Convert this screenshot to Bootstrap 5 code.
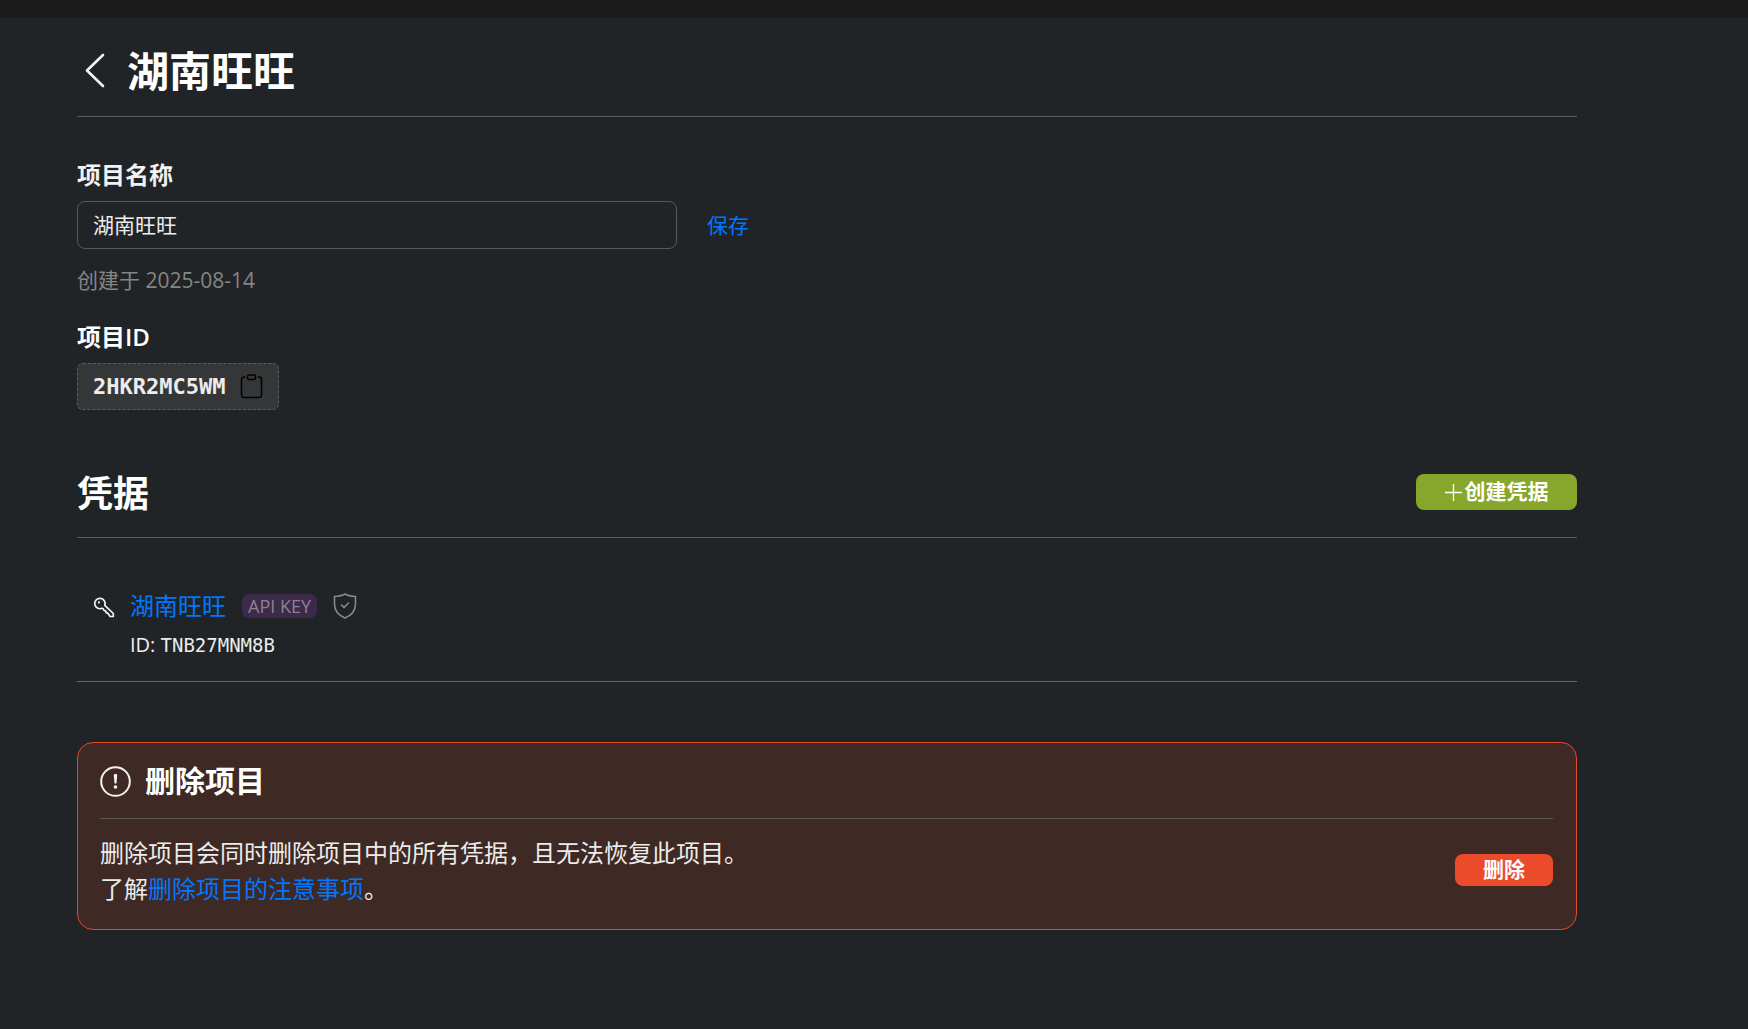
<!DOCTYPE html>
<html lang="zh-CN" data-bs-theme="dark">
<head>
<meta charset="utf-8">
<meta name="viewport" content="width=device-width, initial-scale=1">
<title>湖南旺旺</title>
<link href="https://cdn.jsdelivr.net/npm/bootstrap@5.3.0/dist/css/bootstrap.min.css" rel="stylesheet">
<style>
:root{--page:#202426;--line:#5a5c5d;--fg:#f2f2f2;--link:#0077ff;--muted:#858585}
body{background:var(--page);color:var(--fg);font-family:"Open Sans","Noto Sans CJK SC",sans-serif;font-size:21px;line-height:32px}
a{color:var(--link)}
.topbar{height:18px;background:#1b1b1b}
.page{max-width:1500px;margin-left:77px}
.page-head{padding:27px 0 19px 8px;border-bottom:1px solid var(--line);gap:19px}
.page-head h1{font-size:42px;line-height:52px;font-weight:700}
.back{color:var(--fg);width:23px}
.field-title{font-size:24px;line-height:32px;font-weight:600}
.name-block{margin-top:42px}
.name-row{margin-top:10px;gap:30px}
.name-input{width:600px;height:48px;padding:0 15px 2px;font-size:21px;border:1px solid #58595a;border-radius:8px;background:transparent;color:#ececec}
.save{font-size:21px;line-height:32px;color:var(--link)}
.created{margin-top:15px;color:var(--muted)}
.id-block{margin-top:25px}
.id-box{margin-top:10px;height:47px;padding:0 15px;gap:15px;background:#353637;border:1px dashed #5c5d5e;border-radius:6px}
.id-box code,.cred-id code{font-family:"DejaVu Sans Mono",monospace;color:#ececec}
.id-box code{font-size:22px;font-weight:700}
.copy{color:#000}
.cred-head{margin-top:62px;padding-bottom:21px;border-bottom:1px solid var(--line)}
.cred-head h2{font-size:36px;line-height:44px;font-weight:700}
.btn-create{width:161px;height:36px;margin-bottom:4px;gap:3px;background:#86a72b;color:#fff;font-size:21px;font-weight:700;border-radius:8px}
.btn-create:hover{background:#769424;color:#fff}
.cred{margin-top:50px;padding:0 0 20px 16px;gap:15px;border-bottom:1px solid #5b6c73}
.cred-name{font-size:24px;line-height:36px}
.key-tag{margin-left:16px;height:24px;padding:0 6px;font-size:18px;line-height:24px;border-radius:7px;background:#3d2a4b;color:#8a858d}
.shield{margin-left:16px;color:#8c8c8c}
.cred-id{margin-top:5px;font-size:20px}
.cred-id code{font-size:19px}
.danger-box{margin-top:60px;padding:18px 23px 22px 22px;background:#3e2925;border:1px solid #e24a2a;border-radius:16px}
.danger-title{padding-bottom:17px;border-bottom:1px solid #5c5856;gap:14px}
.danger-title h2{font-size:30px;line-height:40px;font-weight:700}
.danger-body{margin-top:16px}
.danger-text{font-size:24px;line-height:36px;color:#ececec}
.btn-delete{width:98px;height:32px;margin-bottom:2px;background:#eb4b2b;color:#fff;font-size:21px;font-weight:700;border-radius:8px}
.btn-delete:hover{background:#d03d20;color:#fff}
svg{display:block;flex:none}
</style>
</head>
<body>
<div class="topbar"></div>
<main class="page">
  <header class="page-head d-flex align-items-center">
    <a class="back" href="#" aria-label="返回"><svg width="23" height="38" viewBox="0 0 23 38" fill="none" stroke="currentColor" stroke-width="2.600" stroke-linecap="round" stroke-linejoin="round"><path d="M18 3 2 18.500l16 15.500"/></svg></a>
    <h1 class="m-0">湖南旺旺</h1>
  </header>

  <form class="name-block">
    <label class="field-title d-block" for="projectName">项目名称</label>
    <div class="name-row d-flex align-items-center">
      <input class="name-input" id="projectName" type="text" value="湖南旺旺">
      <button class="save btn btn-link p-0 border-0 text-decoration-none" type="button">保存</button>
    </div>
    <p class="created mb-0">创建于 2025-08-14</p>
  </form>

  <section class="id-block">
    <h2 class="field-title mb-0">项目ID</h2>
    <div class="id-box d-inline-flex align-items-center align-top">
      <code>2HKR2MC5WM</code>
      <button class="copy btn p-0 border-0" type="button" aria-label="复制"><svg width="23" height="26" viewBox="0 0 23 26" fill="none" stroke="currentColor" stroke-width="1.500"><path d="M5 3H4A2.500 2.500 0 0 0 1.500 5.500V21a2.500 2.500 0 0 0 2.500 2.500h15a2.500 2.500 0 0 0 2.500-2.500V5.500A2.500 2.500 0 0 0 19 3H18"/><rect x="7.500" y="1" width="8" height="4.500" rx="1.500"/></svg></button>
    </div>
  </section>

  <section>
    <div class="cred-head d-flex justify-content-between align-items-center">
      <h2 class="m-0">凭据</h2>
      <button class="btn btn-create d-flex align-items-center justify-content-center p-0 border-0" type="button"><svg width="17" height="17" viewBox="0 0 17 17" stroke="currentColor" stroke-width="1.300"><path d="M8.500 0v17M0 8.500h17"/></svg>创建凭据</button>
    </div>
    <div class="cred d-flex">
      <svg class="mt-2" width="22" height="22" viewBox="0 0 22 22" fill="none" stroke="currentColor" stroke-width="1.700" stroke-linejoin="round"><path d="M11.800 9.300A5.200 5.200 0 1 0 9 12.300l1.300.4.700 1.800 1.700.4.400 1.700 1.600.5 2.400 3.400H20.300V17.500z"/><circle cx="5.900" cy="6.400" r="1.100" fill="currentColor" stroke="none"/></svg>
      <div>
        <div class="d-flex align-items-center">
          <a class="cred-name text-decoration-none" href="#">湖南旺旺</a>
          <span class="key-tag">API KEY</span>
          <svg class="shield" width="24" height="26" viewBox="0 0 24 26" fill="none" stroke="currentColor" stroke-width="1.500" stroke-linejoin="round" stroke-linecap="round"><path d="M12 1C8.500 3 5 3.300 1.500 3.600V11c0 6.500 4.500 11.500 10.500 14 6-2.500 10.500-7.500 10.500-14V3.600C19 3.300 15.500 3 12 1z"/><path d="m8.500 12 2.500 2.500 4.500-4.500"/></svg>
        </div>
        <div class="cred-id">ID: <code>TNB27MNM8B</code></div>
      </div>
    </div>
  </section>

  <section class="danger-box">
    <div class="danger-title d-flex align-items-center">
      <svg width="31" height="31" viewBox="0 0 31 31" fill="none" stroke="currentColor" stroke-width="2"><circle cx="15.500" cy="15.500" r="14.300"/><path d="M13.800 9.400a1.700 1.700 0 0 1 3.400 0L16.500 17.500h-2z" fill="currentColor" stroke="none"/><circle cx="15.500" cy="21" r="1.800" fill="currentColor" stroke="none"/></svg>
      <h2 class="m-0">删除项目</h2>
    </div>
    <div class="danger-body d-flex justify-content-between align-items-center">
      <p class="danger-text mb-0">删除项目会同时删除项目中的所有凭据，且无法恢复此项目。<br>了解<a class="text-decoration-none" href="#">删除项目的注意事项</a>。</p>
      <button class="btn btn-delete d-flex align-items-center justify-content-center p-0 border-0" type="button">删除</button>
    </div>
  </section>
</main>
<script src="https://cdn.jsdelivr.net/npm/bootstrap@5.3.0/dist/js/bootstrap.bundle.min.js"></script>
</body>
</html>
